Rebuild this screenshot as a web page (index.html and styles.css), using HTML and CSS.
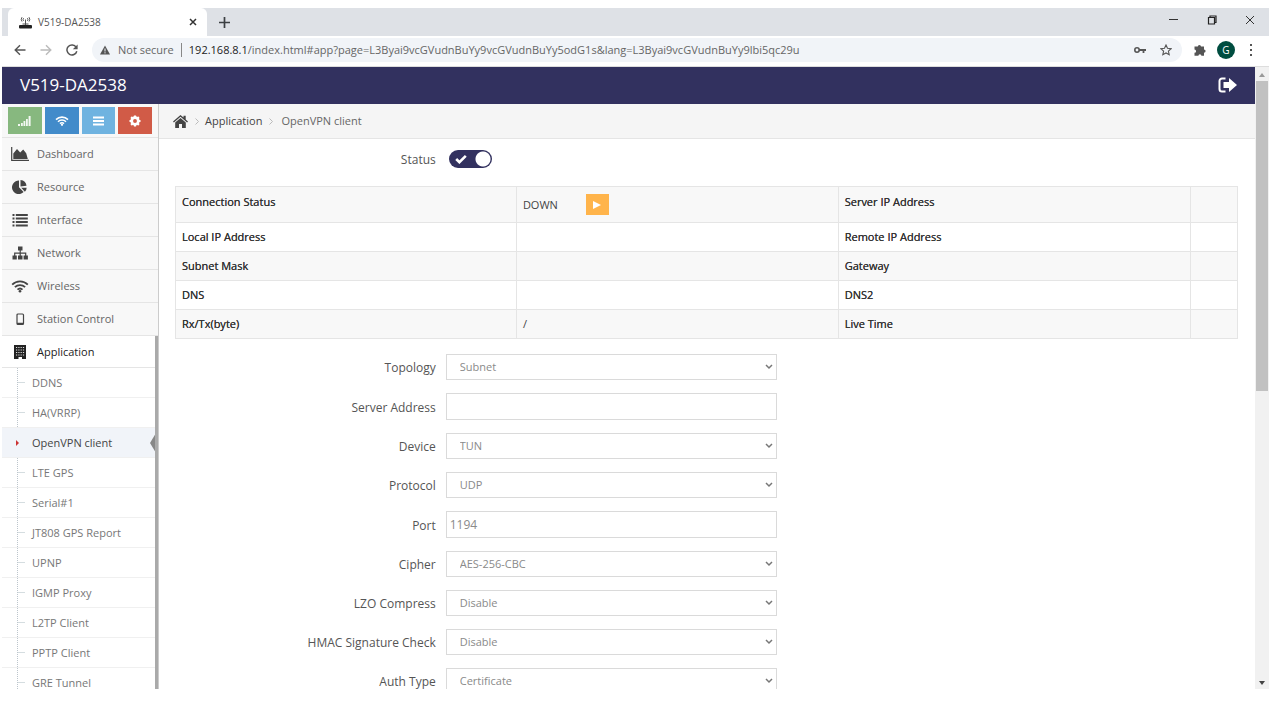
FILE: index.html
```html
<!DOCTYPE html>
<html lang="en">
<head>
<meta charset="utf-8">
<title>V519-DA2538</title>
<link rel="stylesheet" href="styles.css">
</head>
<body>
<div class="window">
  <div class="tabstrip">
    <div class="tab">
      <svg class="tab-icon" viewBox="0 0 13 13"><rect x="0" y="9" width="13" height="3.500" rx="1" fill="#222"/><path d="M6.500 9V3.500M4.600 4.800a2 2 0 0 1 0-2.600M8.400 4.800a2 2 0 0 0 0-2.600M3 5.500a3.600 3.600 0 0 1 0-4.300M10 5.500a3.600 3.600 0 0 0 0-4.300M3.500 8h6" fill="none" stroke="#555" stroke-width="1"/></svg>
      <span class="tab-title">V519-DA2538</span>
      <button class="plain" aria-label="Close tab"><svg width="8" height="8" viewBox="0 0 8 8"><path d="M1 1l6 6M7 1L1 7" stroke="#333" stroke-width="1.500"/></svg></button>
    </div>
    <button class="plain new-tab" aria-label="New tab"><svg width="11" height="11" viewBox="0 0 11 11"><path d="M5.500 0v11M0 5.500h11" stroke="#3c4043" stroke-width="1.700"/></svg></button>
    <div class="window-buttons">
      <button class="plain" aria-label="Minimize"><svg width="10" height="10" viewBox="0 0 10 10"><path d="M0 4.500h9" stroke="#333"/></svg></button>
      <button class="plain" aria-label="Restore"><svg width="10" height="10" viewBox="0 0 10 10"><path d="M1.500 2.500h6v6.500h-6zM3 2.500V1h6v6.500H7.500" fill="none" stroke="#222" stroke-width="1.200"/></svg></button>
      <button class="plain" aria-label="Close window"><svg width="10" height="10" viewBox="0 0 10 10"><path d="M1 1l8 8M9 1L1 9" stroke="#333"/></svg></button>
    </div>
  </div>

  <div class="toolbar">
    <button class="plain" aria-label="Back"><svg width="12" height="12" viewBox="0 0 12 12"><path d="M11.500 6H1.500M6 1.200L1.200 6 6 10.800" fill="none" stroke="#555" stroke-width="1.400"/></svg></button>
    <button class="plain" aria-label="Forward"><svg width="12" height="12" viewBox="0 0 12 12"><path d="M.5 6h10M6 1.200L10.800 6 6 10.800" fill="none" stroke="#bbb" stroke-width="1.400"/></svg></button>
    <button class="plain" aria-label="Reload"><svg width="12" height="12" viewBox="0 0 12 12"><path d="M10.200 3.300A5 5 0 1 0 10.800 7.200" fill="none" stroke="#555" stroke-width="1.500"/><path d="M11.600.4v4.800H6.800z" fill="#555"/></svg></button>
    <div class="omnibox">
      <svg width="10" height="10" viewBox="0 0 10 10"><path d="M5 .4L10 9.500H0z" fill="#555"/><path d="M5 3.500v3M5 7.200v1.200" stroke="#f3f6fa" stroke-width="1"/></svg>
      <span class="not-secure">Not secure</span>
      <span class="url"><b>192.168.8.1</b>/index.html#app?page=L3Byai9vcGVudnBuYy9vcGVudnBuYy5odG1s&amp;lang=L3Byai9vcGVudnBuYy9lbi5qc29u</span>
      <button class="plain" aria-label="Passwords"><svg width="12" height="8" viewBox="0 0 12 8"><circle cx="3" cy="4" r="2.200" fill="none" stroke="#555" stroke-width="1.600"/><path d="M5 4h7M9.500 4v3" fill="none" stroke="#555" stroke-width="1.800"/></svg></button>
      <button class="plain star" aria-label="Bookmark"><svg width="12" height="12" viewBox="0 0 12 12"><path d="M6 1l1.500 3.300 3.600.4-2.700 2.400.8 3.600L6 8.900l-3.200 1.800.8-3.600L.9 4.700l3.600-.4z" fill="none" stroke="#555" stroke-width="1.100"/></svg></button>
    </div>
    <button class="plain" aria-label="Extensions"><svg width="12" height="12" viewBox="0 0 12 12"><path d="M.5 2.500h3.300a1.600 1.600 0 1 1 3.200 0h3v3a1.600 1.600 0 1 1 0 3.200v3H7.400a1.500 1.500 0 1 0-3 0H.5V8.800a1.600 1.600 0 1 0 0-3.200z" fill="#555"/></svg></button>
    <button class="plain avatar" aria-label="Profile">G</button>
    <button class="plain" aria-label="Menu"><svg width="4" height="12" viewBox="0 0 4 12"><path d="M1 0h2v2H1zM1 5h2v2H1zM1 10h2v2H1z" fill="#555"/></svg></button>
  </div>

  <div class="viewport">
    <div class="page">
      <header class="topbar">
        <h1>V519-DA2538</h1>
        <button class="plain" aria-label="Log out"><svg width="19" height="16" viewBox="0 0 19 16"><path d="M7.500 1.500H4a2.500 2.500 0 0 0-2.500 2.500v8A2.500 2.500 0 0 0 4 14.500h3.500" fill="none" stroke="#fff" stroke-width="2"/><path d="M5.500 5H11V1l8 7-8 7V11H5.500z" fill="#fff"/></svg></button>
      </header>
      <div class="columns">
        <nav class="sidebar">
          <div class="shortcuts">
            <button class="green" aria-label="Signal"><svg width="13" height="10" viewBox="0 0 13 10"><path d="M0 8h2v2H0zM3 7h1.800v3H3zM5.500 5h1.800v5H5.500zM8 3h1.800v7H8zM10.600 0h2v10h-2z" fill="#fff" opacity=".9"/></svg></button>
            <button class="blue" aria-label="Wireless"><svg width="14" height="10" viewBox="0 0 14 10"><path d="M1 3.600a8.500 8.500 0 0 1 12 0M3 5.700a5.600 5.600 0 0 1 8 0M5 7.600a2.800 2.800 0 0 1 4 0" fill="none" stroke="#fff" stroke-width="1.600"/><circle cx="7" cy="8.800" r="1.100" fill="#fff"/></svg></button>
            <button class="sky" aria-label="List"><svg width="11" height="10" viewBox="0 0 11 10"><path d="M0 1.500h11M0 5h11M0 8.500h11" stroke="#fff" stroke-width="1.900"/></svg></button>
            <button class="red" aria-label="Settings"><svg width="12" height="12" viewBox="0 0 12 12"><circle cx="6" cy="6" r="3.300" fill="none" stroke="#fff" stroke-width="2.700"/><path d="M6 .5v2M6 9.500v2M.5 6h2M9.500 6h2M2.100 2.100l1.400 1.400M8.500 8.500l1.400 1.400M9.900 2.100L8.500 3.500M3.500 8.500L2.100 9.900" stroke="#fff" stroke-width="2.200"/></svg></button>
          </div>
          <ul class="menu">
            <li><a href="#dashboard"><svg viewBox="0 0 18 14"><path d="M.7 0v13.300H18" fill="none" stroke="#444" stroke-width="1.200"/><path d="M2.300 12V6.500L6 2l3.200 3.500 3-3 3 3.800L16.800 12z" fill="#444"/></svg>Dashboard</a></li>
            <li><a href="#resource"><svg viewBox="0 0 18 14"><path d="M8 .5v6.700l4.600 4.900A6.800 6.800 0 1 1 8 .5z" fill="#444"/><path d="M9.500 0a6.500 6.500 0 0 1 6 5.800l-6 .7z" fill="#444"/><path d="M10.200 7.800h5.500a6 6 0 0 1-1.800 4z" fill="#444"/></svg>Resource</a></li>
            <li><a href="#interface"><svg viewBox="0 0 18 14"><path d="M1.500 2h2M1.500 5.500h2M1.500 9h2M1.500 12.500h2M4.800 2h12M4.800 5.500h12M4.800 9h12M4.800 12.500h12" stroke="#444" stroke-width="2"/></svg>Interface</a></li>
            <li><a href="#network"><svg viewBox="0 0 18 14"><path d="M7 .5h4.500v4H7zM1.500 9.500h4.300v4H1.500zM7 9.500h4.500v4H7zM12.600 9.500h4.300v4h-4.300z" fill="#444"/><path d="M9.200 4v6M3.700 10V7.200h11V10" fill="none" stroke="#444" stroke-width="1.200"/></svg>Network</a></li>
            <li><a href="#wireless"><svg viewBox="0 0 18 14"><path d="M1.200 5.600a11 11 0 0 1 15.600 0M3.900 8.200a7.200 7.200 0 0 1 10.200 0M6.500 10.700a3.600 3.600 0 0 1 5 0" fill="none" stroke="#444" stroke-width="1.800"/><circle cx="9" cy="12.300" r="1.300" fill="#444"/></svg>Wireless</a></li>
            <li><a href="#station"><svg viewBox="0 0 18 14"><rect x="6" y="2" width="6.500" height="10.500" rx="1" fill="none" stroke="#444" stroke-width="1.200"/><path d="M6 11.500h6.500" stroke="#444" stroke-width="1.500"/></svg>Station Control</a></li>
            <li class="open"><a href="#application"><svg viewBox="0 0 18 14"><path d="M3 0h12v14h-4v-2H7.500v2H3z" fill="#222"/><path d="M5 2.500h9M5 5h9M5 7.500h9M5 10h9" stroke="#ddd" stroke-width="1.200" stroke-dasharray="1.200 1.100"/></svg>Application</a>
              <ul class="submenu">
                <li><a href="#ddns">DDNS</a></li>
                <li><a href="#ha">HA(VRRP)</a></li>
                <li class="current"><a href="#openvpn">OpenVPN client</a></li>
                <li><a href="#gps">LTE GPS</a></li>
                <li><a href="#serial">Serial#1</a></li>
                <li><a href="#jt808">JT808 GPS Report</a></li>
                <li><a href="#upnp">UPNP</a></li>
                <li><a href="#igmp">IGMP Proxy</a></li>
                <li><a href="#l2tp">L2TP Client</a></li>
                <li><a href="#pptp">PPTP Client</a></li>
                <li><a href="#gre">GRE Tunnel</a></li>
              </ul>
            </li>
          </ul>
        </nav>

        <main class="content">
          <div class="breadcrumb">
            <a href="#home" aria-label="Home"><svg width="15" height="13" viewBox="0 0 15 13"><path d="M0 6.500L7.500 0l3 2.600V.8h2.200v3.700L15 6.500l-.9 1-6.600-5.700L.9 7.500z" fill="#444"/><path d="M2.200 7.500l5.300-4.600 5.300 4.600V13H9V9H6v4H2.200z" fill="#444"/></svg></a>
            <svg class="sep" width="4" height="7" viewBox="0 0 4 7"><path d="M.5.500l3 3-3 3" fill="none" stroke="#bbb"/></svg>
            <a href="#application">Application</a>
            <svg class="sep" width="4" height="7" viewBox="0 0 4 7"><path d="M.5.500l3 3-3 3" fill="none" stroke="#bbb"/></svg>
            <span class="here">OpenVPN client</span>
          </div>
          <form class="panel">
            <div class="field status">
              <label for="status">Status</label>
              <span class="switch">
                <input type="checkbox" id="status" checked>
                <svg class="tick" width="12" height="10" viewBox="0 0 12 10"><path d="M1.200 5l3.200 3.200L10.800 1.800" fill="none" stroke="#fff" stroke-width="2.600"/></svg>
              </span>
            </div>
            <table class="info">
              <colgroup><col class="c1"><col class="c2"><col class="c3"><col class="c4"></colgroup>
              <tr class="first"><th>Connection Status</th><td><span class="state">DOWN <button type="button" class="play" aria-label="Start"><svg width="8" height="8" viewBox="0 0 8 8"><path d="M0 0l8 4-8 4z" fill="#fff"/></svg></button></span></td><th>Server IP Address</th><td></td></tr>
              <tr><th>Local IP Address</th><td></td><th>Remote IP Address</th><td></td></tr>
              <tr><th>Subnet Mask</th><td></td><th>Gateway</th><td></td></tr>
              <tr><th>DNS</th><td></td><th>DNS2</th><td></td></tr>
              <tr><th>Rx/Tx(byte)</th><td>/</td><th>Live Time</th><td></td></tr>
            </table>
            <div class="fields">
              <div class="field"><label for="topology">Topology</label><span class="select"><select id="topology"><option>Subnet</option></select><svg viewBox="0 0 8 6"><path d="M1 1l3 3 3-3"/></svg></span></div>
              <div class="field"><label for="server">Server Address</label><input type="text" id="server"></div>
              <div class="field"><label for="device">Device</label><span class="select"><select id="device"><option>TUN</option></select><svg viewBox="0 0 8 6"><path d="M1 1l3 3 3-3"/></svg></span></div>
              <div class="field"><label for="protocol">Protocol</label><span class="select"><select id="protocol"><option>UDP</option></select><svg viewBox="0 0 8 6"><path d="M1 1l3 3 3-3"/></svg></span></div>
              <div class="field"><label for="port">Port</label><input type="text" id="port" value="1194"></div>
              <div class="field"><label for="cipher">Cipher</label><span class="select"><select id="cipher"><option>AES-256-CBC</option></select><svg viewBox="0 0 8 6"><path d="M1 1l3 3 3-3"/></svg></span></div>
              <div class="field"><label for="lzo">LZO Compress</label><span class="select"><select id="lzo"><option>Disable</option></select><svg viewBox="0 0 8 6"><path d="M1 1l3 3 3-3"/></svg></span></div>
              <div class="field"><label for="hmac">HMAC Signature Check</label><span class="select"><select id="hmac"><option>Disable</option></select><svg viewBox="0 0 8 6"><path d="M1 1l3 3 3-3"/></svg></span></div>
              <div class="field"><label for="auth">Auth Type</label><span class="select"><select id="auth"><option>Certificate</option></select><svg viewBox="0 0 8 6"><path d="M1 1l3 3 3-3"/></svg></span></div>
            </div>
          </form>
        </main>
      </div>
    </div>
    <div class="scrollbar">
      <svg viewBox="0 0 6 4"><path d="M0 4l3-4 3 4z" fill="#999"/></svg>
      <div class="track"><div class="thumb"></div></div>
      <svg viewBox="0 0 6 4"><path d="M0 0l3 4 3-4z" fill="#444"/></svg>
    </div>
  </div>
</div>
</body>
</html>
```
FILE: styles.css
```css
* { box-sizing: border-box; }
html, body { height: 100%; }
body {
  margin: 0;
  padding: 8px 10px 28px 2px;
  background: #fff;
  color: #444;
  font: 12px/18px "Open Sans", "Noto Sans", sans-serif;
  overflow: hidden;
}
a { color: inherit; text-decoration: none; }
ul { list-style: none; margin: 0; padding: 0; }
svg { display: block; flex: none; }
button { font: inherit; border: 0; padding: 0; display: flex; align-items: center; justify-content: center; }
.plain { background: none; flex: none; color: inherit; }

.window { height: 100%; display: flex; flex-direction: column; }

.tabstrip { flex: none; height: 28px; display: flex; align-items: center; background: #dee1e6; padding-left: 6px; }
.tab {
  width: 199px; height: 28px; display: flex; align-items: center;
  padding: 0 10px 0 11px; background: #fff; border-radius: 6px 6px 0 0; font-size: 10px; color: #555;
}
.tab-icon { width: 13px; height: 13px; margin-right: 6px; }
.tab-title { flex: 1; }
.new-tab { margin-left: 12px; }
.window-buttons { margin-left: auto; display: flex; gap: 28px; padding-right: 14px; }
.window-buttons svg { margin-top: -4px; }

.toolbar { flex: none; height: 31px; display: flex; align-items: center; gap: 14px; padding: 0 16px 2px 12px; border-bottom: 1px solid #ddd; }
.toolbar > .avatar { margin: 0 0 0 -3px; }
.omnibox {
  flex: 1; min-width: 0; height: 24px; margin: 0 -2px 0 0; padding: 0 10px 0 8px;
  display: flex; align-items: center; border-radius: 12px; background: #f1f4f8; color: #666; font-size: 11px;
}
.not-secure { margin: 0 7px 0 8px; white-space: nowrap; }
.url { flex: 1; border-left: 1px solid #888; padding-left: 7px; line-height: 14px; white-space: nowrap; overflow: hidden; }
.url b { font-weight: 400; color: #222; }
.star { margin-left: 14px; }
.avatar { width: 18px; height: 18px; border-radius: 50%; background: #004d40; color: #fff; font-size: 10px; }

.viewport { flex: 1; min-height: 0; display: flex; }
.page { flex: 1; min-width: 0; display: flex; flex-direction: column; }
.topbar { flex: none; height: 37px; background: #32315f; color: #fff; display: flex; align-items: center; justify-content: space-between; padding: 0 18px 1px; }
.topbar h1 { margin: 0; font-size: 17px; font-weight: 400; }
.columns { flex: 1; min-height: 0; display: flex; overflow: hidden; }

.scrollbar { width: 14px; background: #f1f1f1; display: flex; flex-direction: column; align-items: center; gap: 4px; padding: 6px 1px 4px; }
.scrollbar svg { width: 6px; height: 4px; }
.track { flex: 1; width: 100%; }
.thumb { height: 52%; background: #c1c1c1; }

.sidebar { position: relative; width: 157px; flex: none; background: #f8f8f8; border-right: 1px solid #ccc; font-size: 11px; overflow: hidden; }
.sidebar::after { content: ""; position: absolute; right: 0; top: 232px; bottom: 0; width: 3px; background: #aaa; }
.shortcuts { display: grid; grid-template-columns: repeat(4, 1fr); gap: 3px; padding: 3px 6px; }
.shortcuts button { height: 27px; }
.green { background: #87b87f; }
.blue { background: #428bca; }
.sky { background: #6fb3e0; }
.red { background: #d15b47; }
.menu > li { border-top: 1px solid #e5e5e5; }
.menu > li > a { display: flex; align-items: center; height: 32px; padding-left: 9px; color: #666; }
.menu > li > a svg { width: 18px; height: 14px; margin-right: 8px; }
.menu > .open { background: #fff; }
.menu > .open > a { height: 31px; color: #222; }
.submenu { position: relative; border-top: 1px solid #e5e5e5; color: #777; }
.submenu::before { content: ""; position: absolute; left: 15px; top: 0; bottom: 0; border-left: 1px dotted #bcc5cc; }
.submenu li { position: relative; }
.submenu li + li { border-top: 1px solid #f0f0f0; }
.submenu a { display: block; line-height: 15px; padding: 7px 0 7px 30px; }
.submenu li::before { content: ""; position: absolute; left: 16px; top: 14px; width: 7px; border-top: 1px solid #d5dde0; }
.submenu .current { background: #f1f4f9; color: #444; }
.submenu .current::before { left: 14px; top: 12px; width: 0; border: 3px solid transparent; border-left-color: #c33; border-right: 0; }
.submenu .current::after { content: ""; position: absolute; right: 2px; top: 5px; border: 10px solid transparent; border-right: 6px solid #888; border-left: 0; }

.content { flex: 1; min-width: 0; background: #fff; }
.breadcrumb { height: 35px; display: flex; align-items: center; background: #f5f5f5; border-bottom: 1px solid #e5e5e5; padding-left: 14px; font-size: 11px; }
.sep { margin: 0 6px 0 7px; }
.here { color: #666; margin-left: 2px; }
.panel { padding: 10px 17px 0 16px; }
.field { display: grid; grid-template-columns: 26fr 33fr 45fr; column-gap: 10px; align-items: center; }
.field label { text-align: right; color: #555; padding-top: 2px; }
.status { margin-bottom: 17px; }

.switch { position: relative; width: 43px; height: 18px; margin-left: 3px; }
.switch input {
  appearance: none; margin: 0; width: 43px; height: 18px; border-radius: 9px;
  background: radial-gradient(circle at 34px 9px, #fff 7px, #32315f 8px);
}
.switch .tick { position: absolute; left: 6px; top: 4px; }

.info { width: 100%; table-layout: fixed; border-collapse: collapse; font-size: 11px; }
.c1 { width: 32.1%; }
.c2 { width: 30.3%; }
.c3 { width: 33.2%; }
.c4 { width: 4.4%; }
.info th, .info td { border: 1px solid #e5e5e5; padding: 0 6px; height: 29px; text-align: left; }
.info th { color: #333; font-weight: 400; text-shadow: 0 0 0 currentColor; }
.info tr:nth-child(odd) { background: #f8f8f8; }
.info .first > * { height: 36px; }
.info .first th { padding-bottom: 6px; }
.state { display: flex; align-items: center; gap: 28px; }
.play { width: 23px; height: 21px; background: #ffb44b; }

.fields { display: grid; gap: 13px; margin-top: 15px; }
.select { position: relative; display: grid; }
.select svg { position: absolute; right: 4px; top: 10px; width: 8px; height: 6px; fill: none; stroke: #777; stroke-width: 1.5; pointer-events: none; }
select, input[type="text"] { width: 100%; background: #fff; border: 1px solid #dadada; border-radius: 0; color: #8a8a8a; font: 12px/18px "Open Sans", "Noto Sans", sans-serif; }
select { appearance: none; height: 26px; padding: 0 13px 1px; font-size: 11px; }
input[type="text"] { height: 27px; padding: 0 3px; }
```
